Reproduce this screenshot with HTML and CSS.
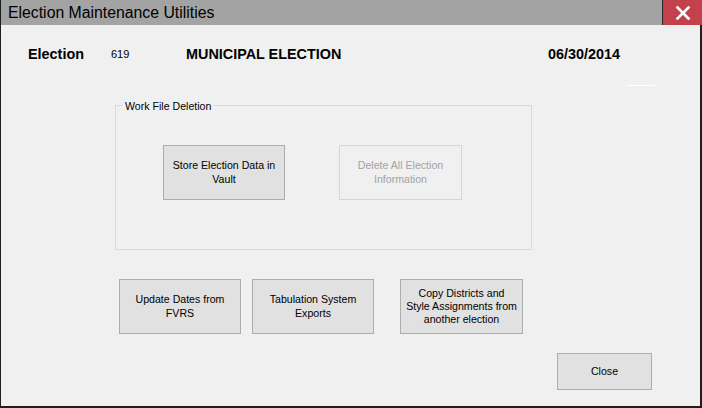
FILE: index.html
```html
<!DOCTYPE html>
<html>
<head>
<meta charset="utf-8">
<link rel="stylesheet" href="styles.css">
</head>
<body>
<div class="window">
  <div class="titlebar">
    <div class="title">Election Maintenance Utilities</div>
    <div class="close-x">
      <svg width="16" height="14" viewBox="0 0 16 14"><path d="M2.5 1.5 L13.5 12.5 M13.5 1.5 L2.5 12.5" stroke="#fff" stroke-width="2.6" stroke-linecap="square" fill="none"/></svg>
    </div>
  </div>
  <div class="content">
    <div class="header">
      <span class="lbl">Election</span>
      <span class="num">619</span>
      <span class="lbl">MUNICIPAL ELECTION</span>
      <span class="lbl">06/30/2014</span>
    </div>
    <div class="dash"></div>
    <div class="group">
      <span class="legend">Work File Deletion</span>
      <div class="group-row">
        <button class="btn wide">Store Election Data in<br>Vault</button>
        <button class="btn wide disabled">Delete All Election<br>Information</button>
      </div>
    </div>
    <div class="bottom-row">
      <button class="btn wide">Update Dates from<br>FVRS</button>
      <button class="btn wide tab">Tabulation System<br>Exports</button>
      <button class="btn wide copy">Copy Districts and<br>Style Assignments from<br>another election</button>
    </div>
    <div class="close-row">
      <button class="btn closebtn">Close</button>
    </div>
  </div>
</div>
</body>
</html>
```
FILE: styles.css
```css
* { box-sizing: border-box; }
html, body { margin: 0; padding: 0; background: #f0f0f0; }
.window {
  width: 702px;
  height: 408px;
  border-left: 1px solid #1e1e1e;
  border-right: 2px solid #1e1e1e;
  border-bottom: 2px solid #1e1e1e;
  background: #f0f0f0;
  font-family: "Liberation Sans", Arial, sans-serif;
  color: #000;
  display: flex;
  flex-direction: column;
}
.titlebar {
  height: 25px;
  background: #a3a3a3;
  display: flex;
  align-items: stretch;
  flex: none;
}
.title {
  padding-left: 7px;
  font-size: 15.8px;
  line-height: 25px;
  color: #000;
}
.close-x {
  margin-left: auto;
  width: 40px;
  margin-right: -2px;
  border-left: 1px solid #2a2a2a;
  background: #c2414c;
  display: flex;
  align-items: center;
  justify-content: center;
}
.content { flex: 1; }
.header {
  margin-top: 21px;
  display: grid;
  grid-template-columns: 83px 75px 362px auto;
  padding-left: 27px;
  line-height: 16px;
  align-items: center;
}
.lbl { font-weight: bold; font-size: 14.4px; }
.num { font-size: 11px; }
.dash {
  margin: 22px 0 0 625px;
  width: 29px;
  height: 2px;
  border-bottom: 1px solid #fff;
  border-right: 1px solid #fff;
}
.group {
  position: relative;
  margin: 19px 0 0 114px;
  width: 417px;
  height: 145px;
  border: 1px solid #dadada;
}
.legend {
  position: absolute;
  left: 7px;
  top: -7px;
  padding: 0 2px;
  background: #f0f0f0;
  font-size: 10.6px;
  line-height: 14px;
}
.group-row {
  display: flex;
  gap: 54px;
  margin: 39px 0 0 47px;
}
.btn {
  font-family: "Liberation Sans", Arial, sans-serif;
  font-size: 10.6px;
  line-height: 13.5px;
  color: #000;
  background: #e1e1e1;
  border: 1px solid #adadad;
  border-radius: 0;
  padding: 0;
  margin: 0;
  text-align: center;
}
.wide { width: 122px; height: 55px; }
.disabled {
  width: 123px;
  color: #a3a3a3;
  background: #f0f0f0;
  border-color: #d6d6d6;
}
.bottom-row {
  display: flex;
  margin: 29px 0 0 118px;
}
.tab { margin-left: 11px; }
.copy { margin-left: 26px; width: 123px; line-height: 12.8px; }
.close-row { margin: 19px 0 0 556px; }
.closebtn { width: 95px; height: 37px; }
```
